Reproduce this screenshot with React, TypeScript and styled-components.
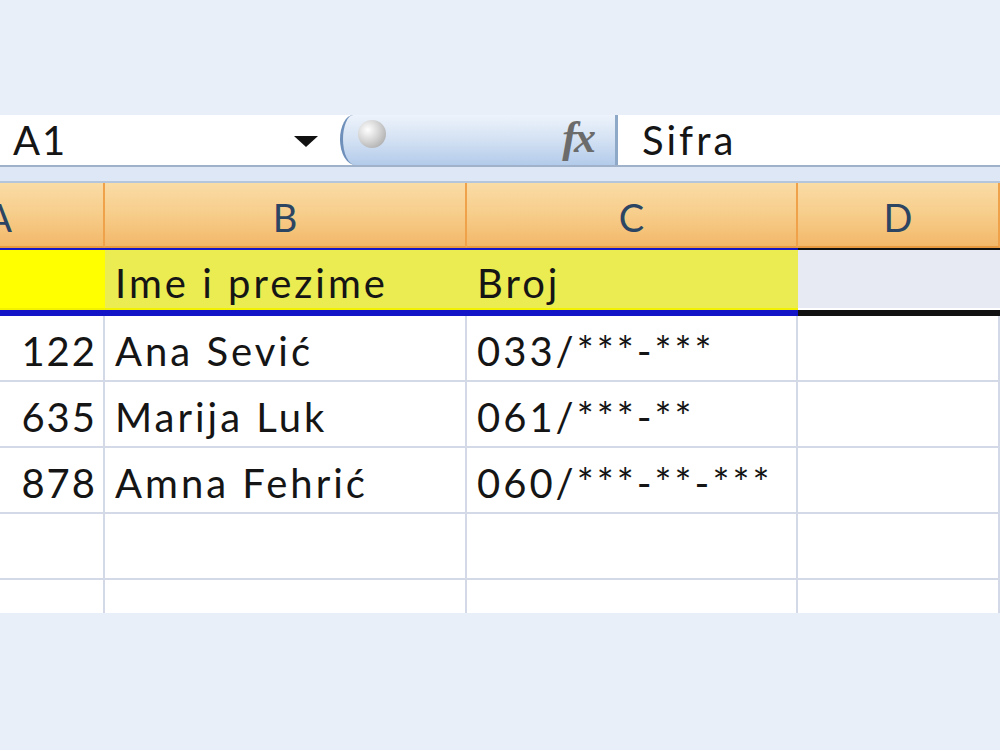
import React from "react";
import styled, { createGlobalStyle } from "styled-components";

const Global = createGlobalStyle`
  html, body { margin: 0; padding: 0; background: #e9eff8; }
  body { font-family: "Lato", "Liberation Sans", sans-serif; }
`;

const Page = styled.div`
  width: 1000px;
  height: 750px;
  overflow: hidden;
  background: #e9eff8;
  display: flex;
  flex-direction: column;
`;

const TopSpace = styled.div`
  height: 115px;
  flex: none;
`;

const FormulaBar = styled.div`
  height: 50px;
  flex: none;
  display: flex;
  background: #ffffff;
  border-bottom: 2px solid #9fb2ca;
`;

const NameBox = styled.div`
  width: 340px;
  display: flex;
  align-items: center;
  justify-content: space-between;
  padding: 0 22px 0 13px;
  box-sizing: border-box;
  font-size: 40px;
  letter-spacing: 2px;
  color: #151515;
`;

const Arrow = styled.div`
  width: 0;
  height: 0;
  border-left: 12px solid transparent;
  border-right: 12px solid transparent;
  border-top: 11px solid #111;
  margin-top: 3px;
`;

const FxZone = styled.div`
  position: relative;
  width: 278px;
  display: flex;
  align-items: center;
  justify-content: flex-end;
  padding-right: 22px;
  box-sizing: border-box;
  background: linear-gradient(#edf3fb 0%, #d6e3f4 45%, #b3cbea 100%);
  border-left: 3px solid #6e8fba;
  border-right: 3px solid #8ea8c8;
  border-radius: 26px 0 0 30px / 48px 0 0 50px;
`;

const Knob = styled.div`
  position: absolute;
  left: 15px;
  top: 5px;
  width: 28px;
  height: 28px;
  border-radius: 50%;
  background: radial-gradient(circle at 35% 35%, #ffffff 0%, #d4d4d4 45%, #9a9a9a 100%);
`;

const Fx = styled.span`
  font-family: "Liberation Serif", serif;
  font-style: italic;
  font-weight: bold;
  font-size: 44px;
  color: #6b6b6b;
  letter-spacing: -3px;
  margin-top: -6px;
`;

const FormulaInput = styled.div`
  flex: 1;
  display: flex;
  align-items: center;
  padding-left: 24px;
  font-size: 40px;
  letter-spacing: 3px;
  color: #151515;
`;

const Band = styled.div`
  height: 14px;
  flex: none;
  background: #dde7f5;
  border-bottom: 2px solid #b5c6dc;
`;

const Grid = styled.div`
  margin-left: -105px;
  height: 430px;
  flex: none;
  overflow: hidden;
  display: grid;
  grid-template-columns: 210px 362px 331px 202px;
  grid-template-rows: 65px 68px 66px 66px 66px 66px 66px;
  background: #ffffff;
`;

const Head = styled.div`
  background: linear-gradient(#fadca6 0%, #f7cd8a 50%, #f2b86a 100%);
  border-right: 2px solid #f0a24a;
  border-bottom: 2px solid #e89a40;
  display: flex;
  align-items: center;
  justify-content: center;
  font-size: 38px;
  color: #2c4563;
  padding-top: 4px;
  box-sizing: border-box;
`;

const TitleCell = styled.div<{ $bg: string; $line: string }>`
  background: ${(p) => p.$bg};
  border-top: 2px solid ${(p) => p.$line};
  border-bottom: 6px solid ${(p) => p.$line};
  box-shadow: inset 0 -2px 0 ${(p) => (p.$line === "#111111" ? "#ffffff" : "#f2f200")};
  display: flex;
  align-items: center;
  padding: 6px 10px 0;
  box-sizing: border-box;
  font-size: 40px;
  letter-spacing: 3px;
  color: #151515;
`;

const Cell = styled.div<{ $right?: boolean }>`
  border-right: 2px solid #d3d9e6;
  border-bottom: 2px solid #d3d9e6;
  display: flex;
  align-items: center;
  justify-content: ${(p) => (p.$right ? "flex-end" : "flex-start")};
  padding: 6px ${(p) => (p.$right ? "6px" : "10px")} 0 10px;
  box-sizing: border-box;
  font-size: 40px;
  letter-spacing: ${(p) => (p.$right ? "2px" : "3px")};
  color: #151515;
  white-space: nowrap;
`;

const rows = [
  ["122", "Ana Sević", "033/***-***"],
  ["635", "Marija Luk", "061/***-**"],
  ["878", "Amna Fehrić", "060/***-**-***"],
  ["", "", ""],
  ["", "", ""],
];

export default function App() {
  return (
    <Page>
      <Global />
      <TopSpace />
      <FormulaBar>
        <NameBox>
          <span>A1</span>
          <Arrow />
        </NameBox>
        <FxZone>
          <Knob />
          <Fx>fx</Fx>
        </FxZone>
        <FormulaInput>Sifra</FormulaInput>
      </FormulaBar>
      <Band />
      <Grid>
        <Head>A</Head>
        <Head>B</Head>
        <Head>C</Head>
        <Head>D</Head>
        <TitleCell $bg="#ffff00" $line="#1515c8" />
        <TitleCell $bg="#ebeb52" $line="#1515c8">Ime i prezime</TitleCell>
        <TitleCell $bg="#ebeb52" $line="#1515c8">Broj</TitleCell>
        <TitleCell $bg="#e7e9f3" $line="#111111" />
        {rows.map((r, i) => (
          <React.Fragment key={i}>
            <Cell $right>{r[0]}</Cell>
            <Cell>{r[1]}</Cell>
            <Cell>{r[2]}</Cell>
            <Cell />
          </React.Fragment>
        ))}
      </Grid>
    </Page>
  );
}
